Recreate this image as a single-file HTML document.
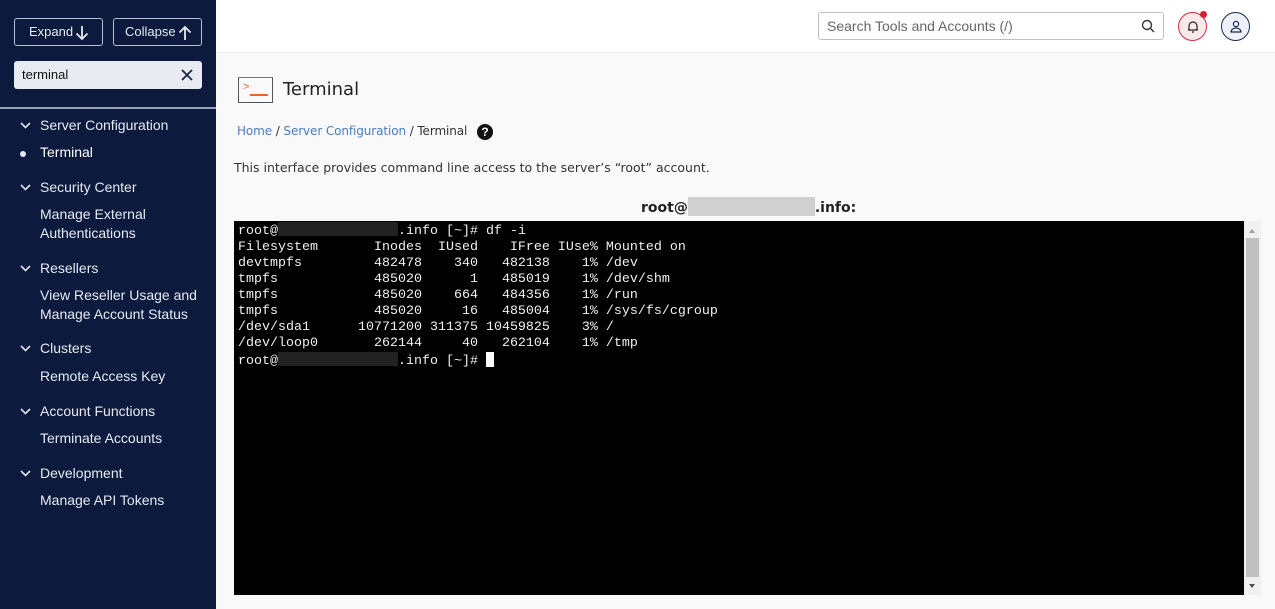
<!DOCTYPE html>
<html><head><meta charset="utf-8"><style>
*{box-sizing:border-box;margin:0;padding:0}
body{width:1275px;height:609px;overflow:hidden;background:#f9f9f9;font-family:"Liberation Sans",sans-serif;position:relative}
.sb{position:absolute;left:0;top:0;width:216px;height:609px;background:#0c1b3d;color:#e6e9f0}
.btn{position:absolute;top:18px;height:28px;border:1px solid #b8c0d0;border-radius:3px;color:#e6e9f0;font-size:13px;line-height:26px;padding-left:14px}
.btn svg{position:absolute;top:6px}
.srch{position:absolute;left:14px;top:61px;width:188px;height:28px;background:#e8ebf2;border-radius:3px;color:#111;font-size:13px;line-height:28px;padding-left:8px}
.hr{position:absolute;left:0;top:107px;width:216px;height:2px;background:#9aa2b3}
.it{position:absolute;left:40px;font-size:14px;line-height:19px;color:#e6e9f0}
.chev{position:absolute;left:20px}
.hdr{position:absolute;left:216px;top:0;width:1059px;height:53px;background:#fff;border-bottom:1px solid #eee}
.term{position:absolute;left:234px;top:221px;width:1010px;height:374px;background:#000;font-family:"Liberation Mono",monospace;font-size:13.33px;line-height:16px;color:#f0f0f0;padding:1px 0 0 4px;white-space:pre}
.blk{display:inline-block;width:120px;height:14px;background:#222;vertical-align:-2px}
</style></head><body>
<div class="sb">
<div class="btn" style="left:14px;width:89px">Expand <svg style="left:60px" width="14" height="16" viewBox="0 0 14 16"><path d="M7 1v13M1.5 8.5L7 14l5.5-5.5" fill="none" stroke="#e6e9f0" stroke-width="1.8"/></svg></div>
<div class="btn" style="left:113px;width:89px;padding-left:11px">Collapse <svg style="left:64px" width="14" height="16" viewBox="0 0 14 16"><path d="M7 15V2M1.5 7.5L7 2l5.5 5.5" fill="none" stroke="#e6e9f0" stroke-width="1.8"/></svg></div>
<div class="srch">terminal<svg style="position:absolute;right:9px;top:8px" width="12" height="12" viewBox="0 0 12 12"><path d="M1 1l10 10M11 1L1 11" stroke="#1a2540" stroke-width="1.8"/></svg></div>
<div class="hr"></div>
<svg class="chev" style="top:122px" width="11" height="7" viewBox="0 0 11 7"><path d="M1 1l4.5 4.5L10 1" fill="none" stroke="#dfe3ea" stroke-width="1.6"/></svg><div class="it" style="top:116px">Server Configuration</div>
<div style="position:absolute;left:20px;top:151px;width:6px;height:6px;border-radius:50%;background:#e6e9f0"></div><div class="it" style="top:143px;color:#fff">Terminal</div>
<svg class="chev" style="top:184px" width="11" height="7" viewBox="0 0 11 7"><path d="M1 1l4.5 4.5L10 1" fill="none" stroke="#dfe3ea" stroke-width="1.6"/></svg><div class="it" style="top:178px">Security Center</div>
<div class="it" style="top:205px">Manage External<br>Authentications</div>
<svg class="chev" style="top:265px" width="11" height="7" viewBox="0 0 11 7"><path d="M1 1l4.5 4.5L10 1" fill="none" stroke="#dfe3ea" stroke-width="1.6"/></svg><div class="it" style="top:259px">Resellers</div>
<div class="it" style="top:286px">View Reseller Usage and<br>Manage Account Status</div>
<svg class="chev" style="top:345px" width="11" height="7" viewBox="0 0 11 7"><path d="M1 1l4.5 4.5L10 1" fill="none" stroke="#dfe3ea" stroke-width="1.6"/></svg><div class="it" style="top:339px">Clusters</div>
<div class="it" style="top:367px">Remote Access Key</div>
<svg class="chev" style="top:408px" width="11" height="7" viewBox="0 0 11 7"><path d="M1 1l4.5 4.5L10 1" fill="none" stroke="#dfe3ea" stroke-width="1.6"/></svg><div class="it" style="top:402px">Account Functions</div>
<div class="it" style="top:429px">Terminate Accounts</div>
<svg class="chev" style="top:470px" width="11" height="7" viewBox="0 0 11 7"><path d="M1 1l4.5 4.5L10 1" fill="none" stroke="#dfe3ea" stroke-width="1.6"/></svg><div class="it" style="top:464px">Development</div>
<div class="it" style="top:491px">Manage API Tokens</div>
</div>
<div class="hdr">
<div style="position:absolute;left:602px;top:12px;width:346px;height:28px;border:1px solid #b9bfc9;border-radius:3px;font-size:14px;color:#666;line-height:26px;padding-left:8px">Search Tools and Accounts (/)
<svg style="position:absolute;right:8px;top:6px" width="14" height="14" viewBox="0 0 14 14"><circle cx="6" cy="6" r="4.5" fill="none" stroke="#333" stroke-width="1.4"/><path d="M9.3 9.3L13 13" stroke="#333" stroke-width="1.4"/></svg></div>
<div style="position:absolute;left:962px;top:12px;width:29px;height:29px;border-radius:50%;border:1px solid #d0303f;background:#fbe9eb"><svg style="position:absolute;left:7px;top:6px" width="14" height="15" viewBox="0 0 14 15"><path d="M3 11V7a4 4 0 0 1 8 0v4H3zM2 11h10M6 13h2" fill="none" stroke="#222" stroke-width="1.2"/></svg></div>
<div style="position:absolute;left:984px;top:11px;width:7px;height:7px;border-radius:50%;background:#d0202f"></div>
<div style="position:absolute;left:1005px;top:12px;width:29px;height:29px;border-radius:50%;border:1px solid #1a2a50;background:#eef1fa"><svg style="position:absolute;left:7px;top:6px" width="14" height="16" viewBox="0 0 14 16"><circle cx="7" cy="5" r="2.6" fill="none" stroke="#1a2a50" stroke-width="1.2"/><path d="M2 13a5 4 0 0 1 10 0z" fill="none" stroke="#1a2a50" stroke-width="1.2"/></svg></div>
</div>
<div style="position:absolute;left:238px;top:77px;width:35px;height:26px;border:1px solid #555;border-top-color:#777"><span style="position:absolute;left:4px;top:3px;color:#f0602a;font-size:11px">&gt;</span><div style="position:absolute;left:11px;top:16px;width:18px;height:1.5px;background:#f0602a"></div></div>
<div style="position:absolute;left:283px;top:79px;color:#222;font-family:'DejaVu Sans',sans-serif;font-size:18px">Terminal</div>
<div style="position:absolute;left:237px;top:124px;color:#333;font-family:'DejaVu Sans',sans-serif;font-size:12px;letter-spacing:-0.1px"><span style="color:#4a7cc0">Home</span> / <span style="color:#4a7cc0">Server Configuration</span> / Terminal</div>
<div style="position:absolute;left:477px;top:124px;width:16px;height:16px;border-radius:50%;background:#111;color:#fff;font-size:12px;font-weight:bold;text-align:center;line-height:16px">?</div>
<div style="position:absolute;left:234px;top:160px;font-family:'DejaVu Sans',sans-serif;font-size:12.5px;color:#333">This interface provides command line access to the server’s “root” account.</div>
<div style="position:absolute;left:641px;top:197px;font-family:'DejaVu Sans',sans-serif;font-size:14px;font-weight:bold;color:#222">root@<span style="display:inline-block;width:127px;height:19px;background:#d0d0d0;vertical-align:-4px"></span>.info:</div>
<div class="term">root@<span class="blk"></span>.info [~]# df -i
Filesystem       Inodes  IUsed    IFree IUse% Mounted on
devtmpfs         482478    340   482138    1% /dev
tmpfs            485020      1   485019    1% /dev/shm
tmpfs            485020    664   484356    1% /run
tmpfs            485020     16   485004    1% /sys/fs/cgroup
/dev/sda1      10771200 311375 10459825    3% /
/dev/loop0       262144     40   262104    1% /tmp
root@<span class="blk"></span>.info [~]# <span style="display:inline-block;width:8px;height:15px;background:#fff;vertical-align:-3px"></span></div>
<div style="position:absolute;left:1244px;top:221px;width:17px;height:374px;background:#f0f0f0">
<div style="position:absolute;left:2px;top:17px;width:13px;height:339px;background:#c0c0c0"></div>
<div style="position:absolute;left:5px;top:8px;border:3.5px solid transparent;border-bottom:4px solid #a0a0a0;border-top:0"></div>
<div style="position:absolute;left:5px;top:363px;border:3.5px solid transparent;border-top:4px solid #505050;border-bottom:0"></div>
</div>
</body></html>
